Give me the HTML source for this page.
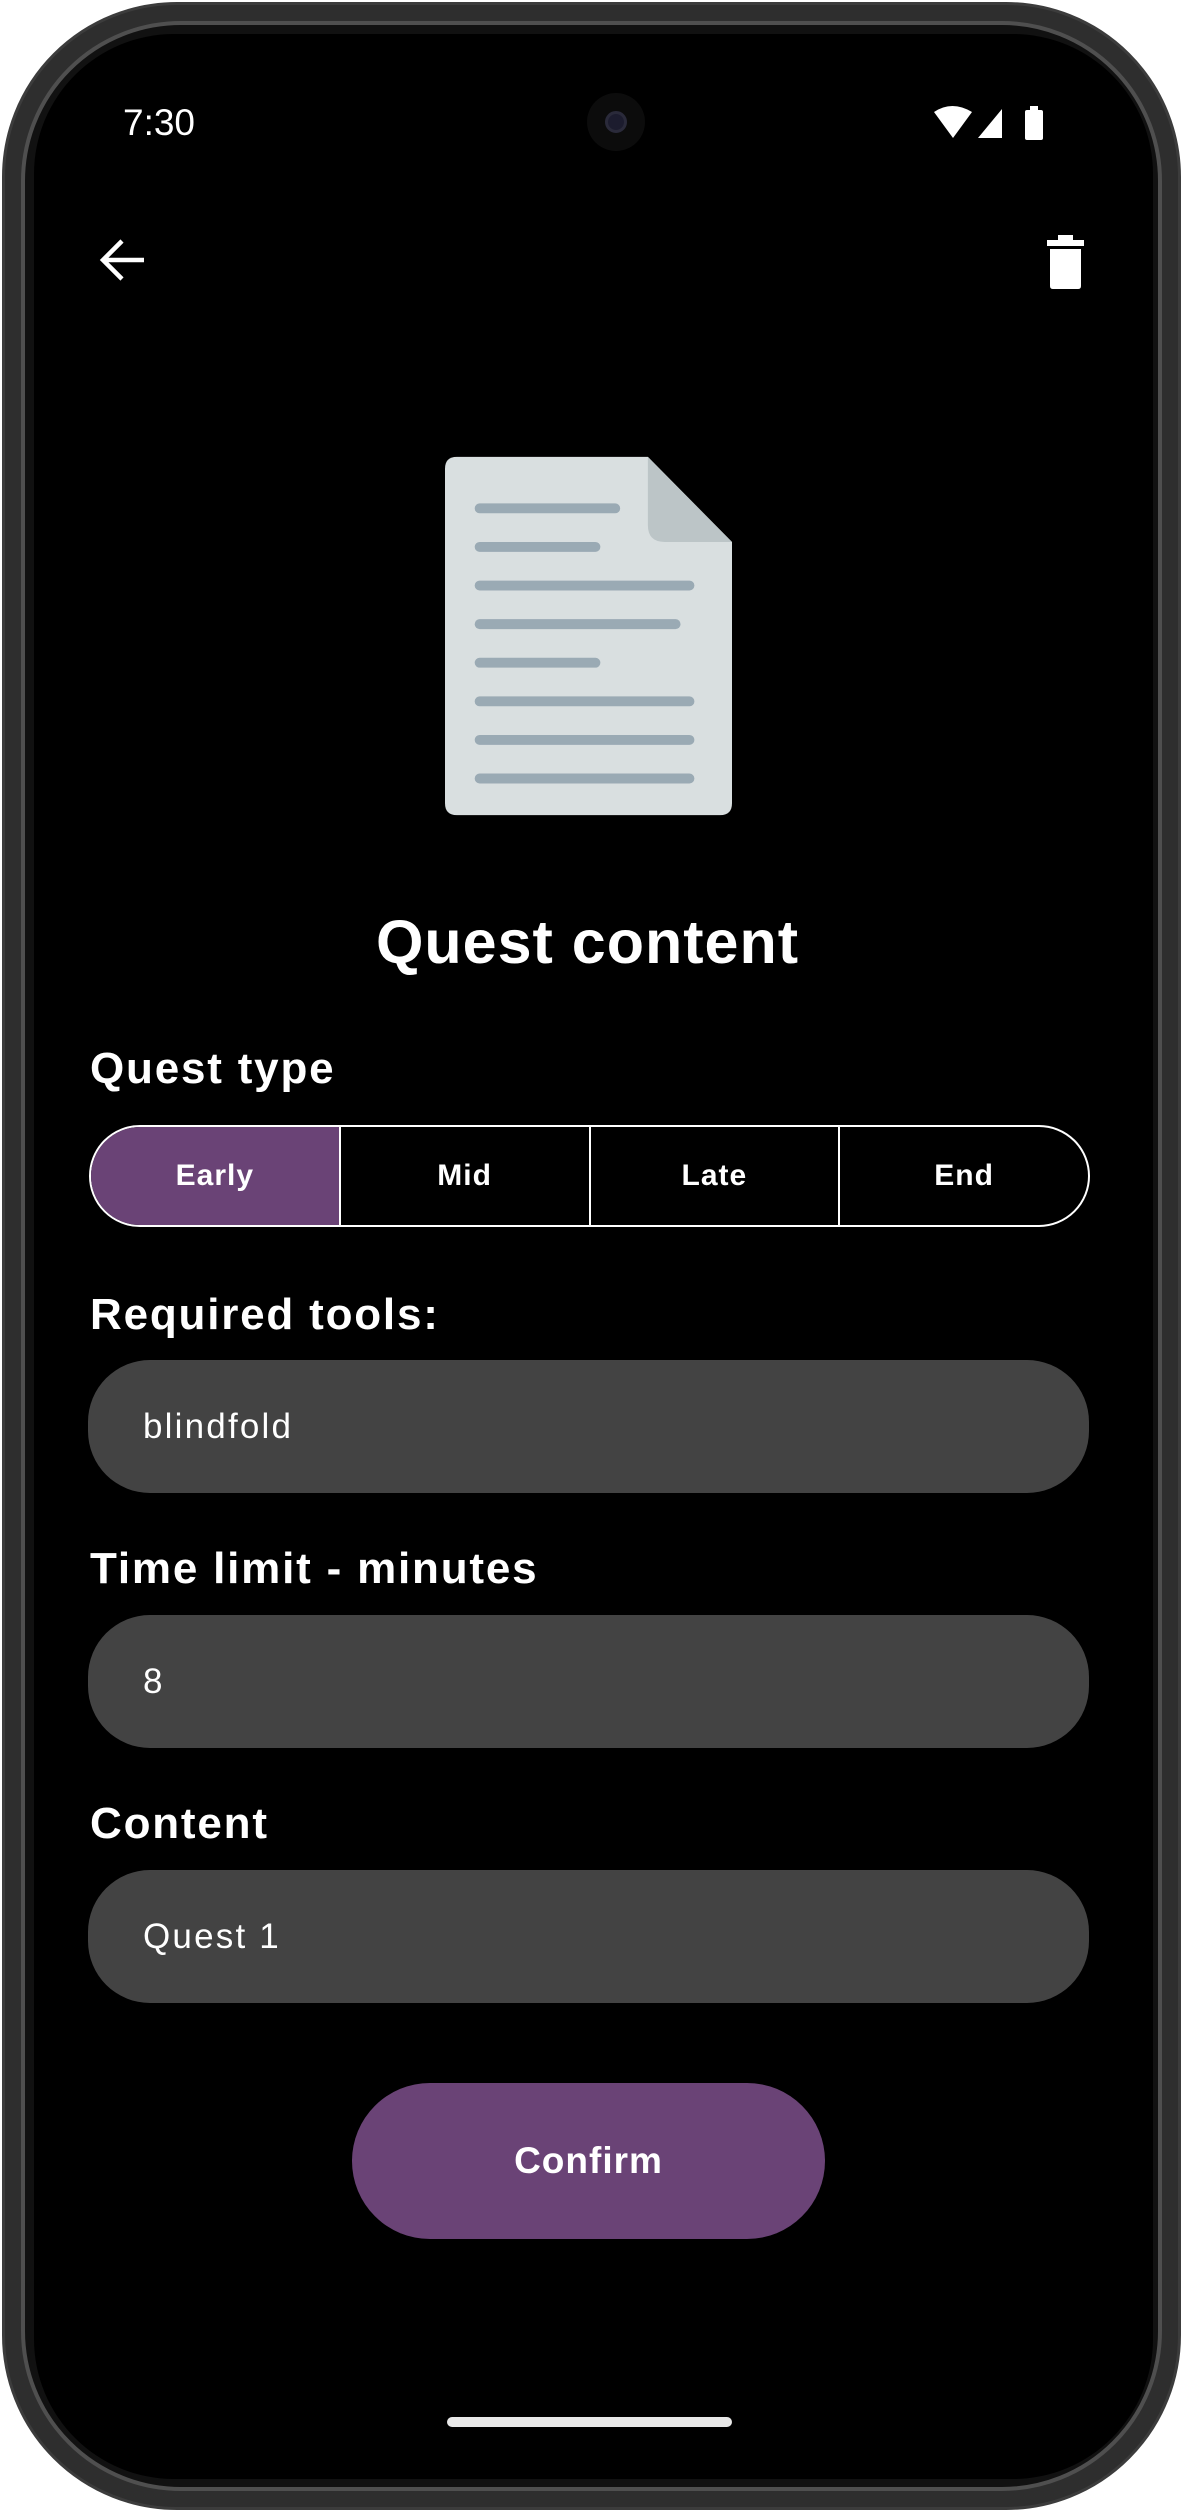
<!DOCTYPE html>
<html><head><meta charset="utf-8"><style>
*{margin:0;padding:0;box-sizing:border-box}
html,body{width:1187px;height:2513px;background:#fff;overflow:hidden;font-family:"Liberation Sans",sans-serif;}
.frame{position:absolute;left:2px;top:2px;width:1179px;height:2508px;border-radius:175px;background:#2e2e2e;border:3px solid #3c3c3c;}
.rim{position:absolute;left:16px;top:16px;right:16px;bottom:16px;border-radius:160px;border:4px solid #4f4f4f;background:#111;}
.screen{position:absolute;left:34px;top:34px;width:1119px;height:2445px;border-radius:140px;background:#000;overflow:hidden;}
.abs{position:absolute}
.t{color:#fff;position:absolute}
.lbl{font-weight:bold;font-size:44px;color:#fff;position:absolute;left:56px;letter-spacing:1.8px}
.field{position:absolute;left:54px;width:1001px;height:133px;border-radius:62px;background:#434343;color:#fff;font-size:35px;padding-left:55px;line-height:133px;letter-spacing:2.2px}
.seg{position:absolute;left:55px;top:1091px;width:1001px;height:102px;border:2px solid #fff;border-radius:51px;display:flex;overflow:hidden}
.seg div{flex:1;color:#fff;font-size:30px;font-weight:bold;text-align:center;line-height:98px;border-left:2px solid #fff;letter-spacing:1px}
.seg div:first-child{border-left:none;background:#6a4376}
</style></head><body>
<div class="frame"><div class="rim"></div></div>
<div class="screen">
  <div class="t" style="left:89px;top:68px;font-size:37px;">7:30</div>
  <div class="abs" style="left:553px;top:59px;width:58px;height:58px;border-radius:50%;background:#0c0c0c;"></div>
  <div class="abs" style="left:571px;top:77px;width:22px;height:22px;border-radius:50%;background:#1c1c2e;border:3px solid #2a2a3a"></div>
  <svg class="abs" style="left:898px;top:70px" width="120" height="46" viewBox="0 0 120 46">
    <path d="M2 8 Q20 -4 40 8 L21 34 Z" fill="#fff"/>
    <path d="M46 34 L70 5 L70 34 Z" fill="#fff"/>
    <rect x="93" y="6" width="18" height="30" rx="2" fill="#fff"/><rect x="98" y="2" width="8" height="5" fill="#fff"/>
  </svg>
  <svg class="abs" style="left:64px;top:201px" width="50" height="50" viewBox="0 0 50 50">
    <path d="M46 25 H6 M24 6 L5 25 L24 44" stroke="#fff" stroke-width="4.5" fill="none"/>
  </svg>
  <svg class="abs" style="left:1012px;top:200px" width="40" height="56" viewBox="0 0 40 56">
    <rect x="1" y="6" width="37" height="6" fill="#fff"/><rect x="12" y="1" width="15" height="7" fill="#fff"/>
    <path d="M4 15 H35 V52 Q35 55 32 55 H7 Q4 55 4 52 Z" fill="#fff"/>
  </svg>
  <svg class="abs" style="left:411px;top:421px" width="287" height="362" viewBox="0 0 290 362">
    <path d="M12 0 H205 L290 86 V350 Q290 362 278 362 H12 Q0 362 0 350 V12 Q0 0 12 0 Z" fill="#d9dfe0"/>
    <path d="M205 0 L290 86 H222 Q205 86 205 69 Z" fill="#bcc5c7"/>
    <g stroke="#9aaab4" stroke-width="10" stroke-linecap="round">
      <line x1="35" y1="52" x2="172" y2="52"/><line x1="35" y1="91" x2="152" y2="91"/>
      <line x1="35" y1="130" x2="247" y2="130"/><line x1="35" y1="169" x2="233" y2="169"/>
      <line x1="35" y1="208" x2="152" y2="208"/><line x1="35" y1="247" x2="247" y2="247"/>
      <line x1="35" y1="286" x2="247" y2="286"/><line x1="35" y1="325" x2="247" y2="325"/>
    </g>
  </svg>
  <div class="t" style="left:-6px;width:1119px;text-align:center;top:873px;font-size:61px;font-weight:bold;letter-spacing:1px">Quest content</div>
  <div class="lbl" style="top:1010px">Quest type</div>
  <div class="seg"><div>Early</div><div>Mid</div><div>Late</div><div>End</div></div>
  <div class="lbl" style="top:1256px">Required tools:</div>
  <div class="field" style="top:1326px">blindfold</div>
  <div class="lbl" style="top:1510px">Time limit - minutes</div>
  <div class="field" style="top:1581px">8</div>
  <div class="lbl" style="top:1765px">Content</div>
  <div class="field" style="top:1836px">Quest 1</div>
  <div class="abs" style="left:318px;top:2049px;width:473px;height:156px;border-radius:78px;background:#6a4376;color:#fff;font-size:37px;font-weight:bold;text-align:center;line-height:156px;letter-spacing:1px">Confirm</div>
  <div class="abs" style="left:413px;top:2383px;width:285px;height:10px;border-radius:5px;background:#e8e8e8;"></div>
</div>
</body></html>
